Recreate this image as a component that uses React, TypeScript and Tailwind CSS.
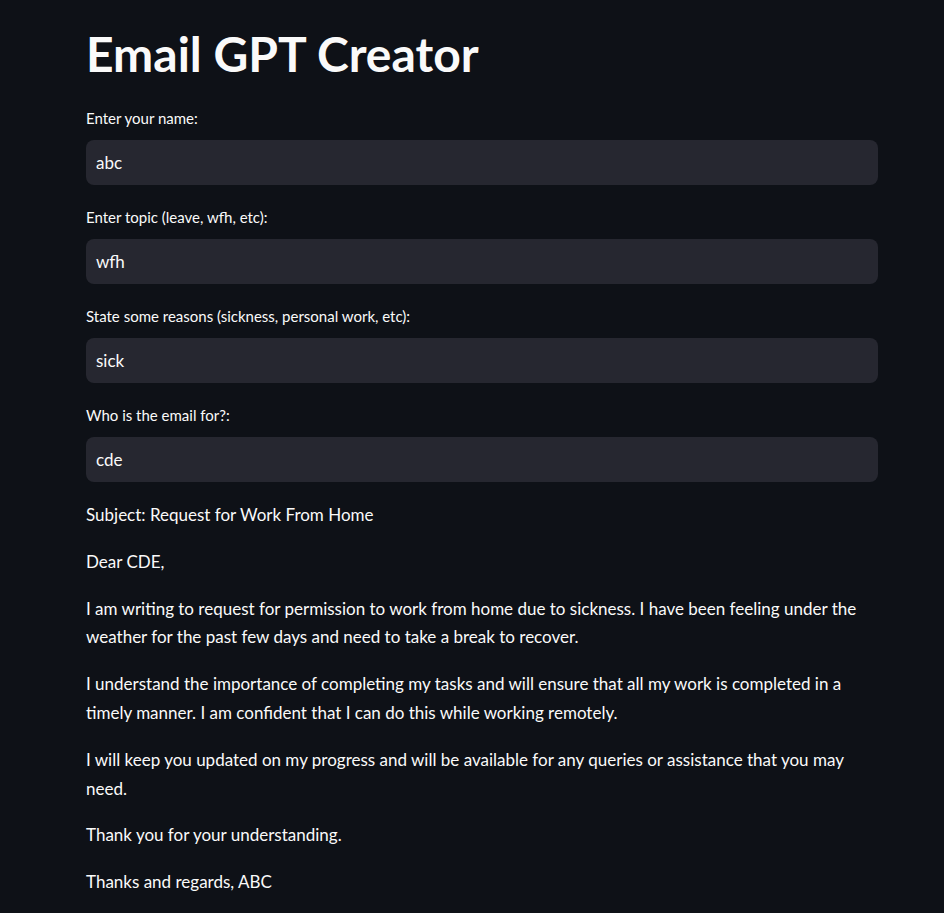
import React from "react";

const fields = [
  { label: "Enter your name:", value: "abc" },
  { label: "Enter topic (leave, wfh, etc):", value: "wfh" },
  { label: "State some reasons (sickness, personal work, etc):", value: "sick" },
  { label: "Who is the email for?:", value: "cde" },
];

export default function App() {
  return (
    <div
      className="min-h-[913px] w-full bg-[#0e1117] text-[#fafafa]"
      style={{ fontFamily: "Lato, 'Noto Sans', sans-serif" }}
    >
      <div className="ml-[86px] w-[792px] pt-[26px] pb-[10px]">
        <h1 className="text-[48px] font-bold leading-[56px]">Email GPT Creator</h1>
        <div className="mt-[26px] flex flex-col">
          {fields.map((f) => (
            <div key={f.label} className="mb-[22px] flex flex-col">
              <label className="text-[15px] leading-[20px]">{f.label}</label>
              <div className="mt-[12px] flex h-[45px] items-center rounded-[8px] bg-[#262730] pl-[10px] text-[17px]">
                {f.value}
              </div>
            </div>
          ))}
        </div>
        <div className="-mt-[3px] text-[17px] leading-[28.8px]">
          <p className="mb-[18px]">Subject: Request for Work From Home</p>
          <p className="mb-[18px]">Dear CDE,</p>
          <p className="mb-[18px]">
            I am writing to request for permission to work from home due to sickness. I have been feeling under the weather for the past few days and need to take a break to recover.
          </p>
          <p className="mb-[18px]">
            I understand the importance of completing my tasks and will ensure that all my work is completed in a timely manner. I am confident that I can do this while working remotely.
          </p>
          <p className="mb-[18px]">
            I will keep you updated on my progress and will be available for any queries or assistance that you may need.
          </p>
          <p className="mb-[18px]">Thank you for your understanding.</p>
          <p className="mb-[18px]">Thanks and regards, ABC</p>
        </div>
      </div>
    </div>
  );
}
